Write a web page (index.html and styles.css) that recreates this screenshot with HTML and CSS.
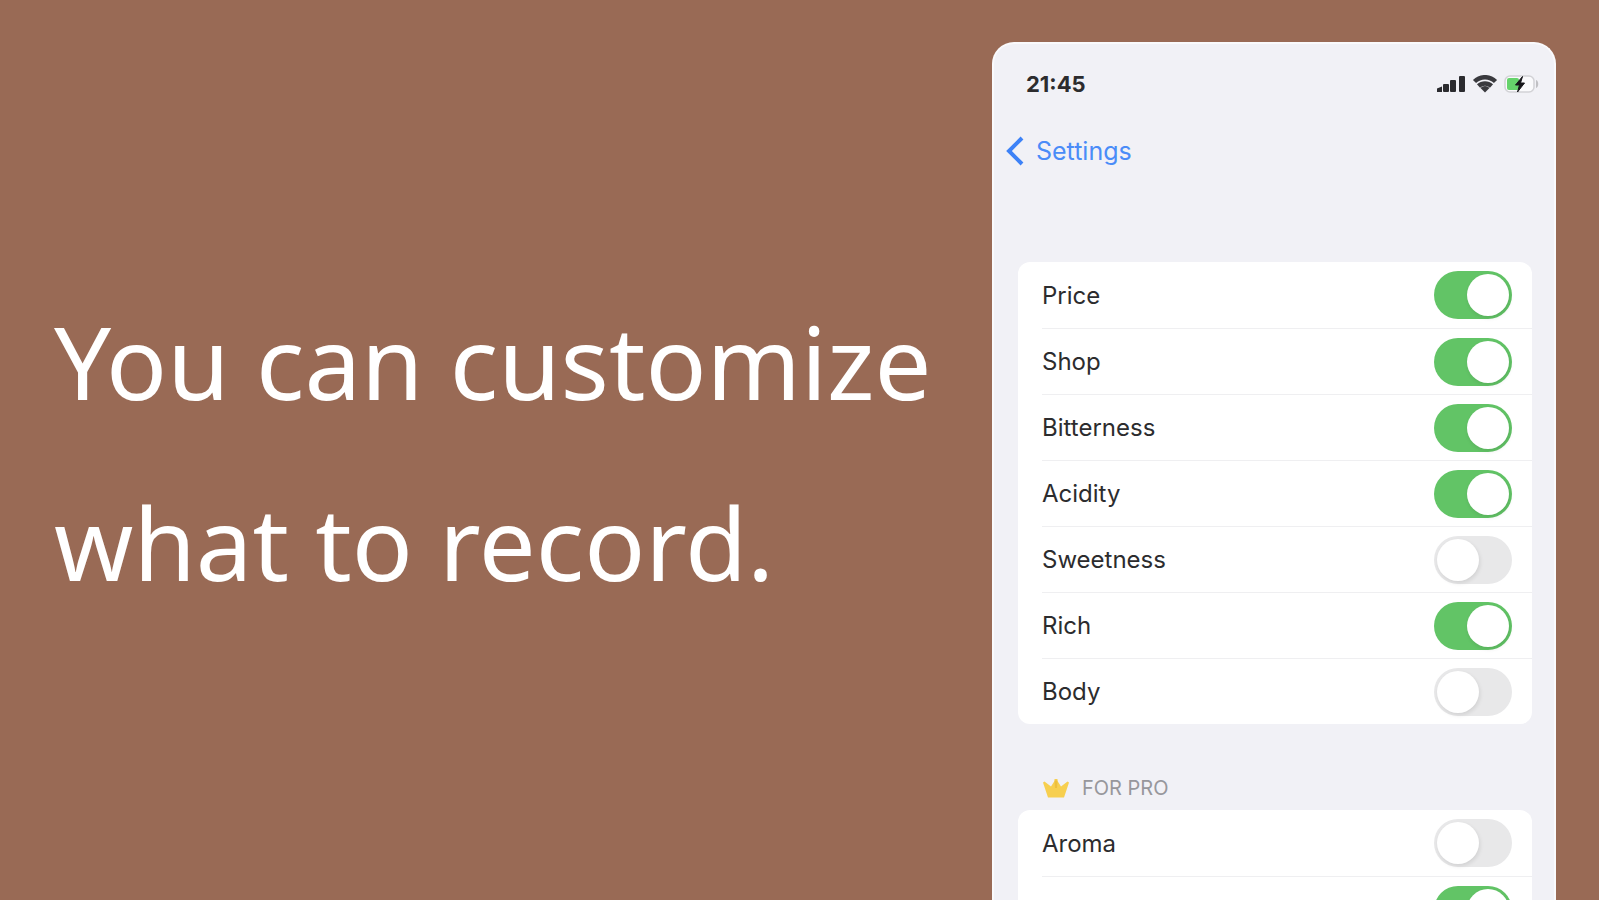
FILE: index.html
```html
<!DOCTYPE html>
<html lang="en">
<head>
  <meta charset="UTF-8">
  <meta name="viewport" content="width=device-width, initial-scale=1.0">
  <title>Customize what to record</title>
  <link rel="stylesheet" href="styles.css">
</head>
<body>
  <main class="slide">
    <h1 class="headline">You can customize<br>what to record.</h1>

    <section class="phone">
      <!-- Status bar -->
      <div class="status-bar">
        <span class="clock">21:45</span>
        <div class="status-icons">
          <svg width="30" height="18" viewBox="0 0 30 18" fill="#2b2b2f">
            <path d="M1 17v-3.500l5-2V17z"/>
            <rect x="7" y="9" width="6" height="8" rx="1"/>
            <rect x="14" y="5" width="6" height="12" rx="1"/>
            <rect x="23" y="1" width="6" height="16" rx="1"/>
          </svg>
          <svg width="26" height="18" viewBox="0 0 26 18" fill="none" stroke="#3a3a3e" stroke-width="4.500">
            <path d="M2.500 6.500a15 15 0 0 1 21 0"/>
            <path d="M6.500 11a9.500 9.500 0 0 1 13 0"/>
            <path d="M13 17.500l-4.500-4.500a6 6 0 0 1 9 0z" fill="#3a3a3e" stroke="none"/>
          </svg>
          <svg width="36" height="18" viewBox="0 0 36 18">
            <rect x="1" y="1" width="29" height="16" rx="5" fill="#fafafc" stroke="#d2d2d6" stroke-width="1.500"/>
            <path d="M32 5c3 1 3 7 0 8z" fill="#c0c0c4"/>
            <rect x="3" y="3" width="12" height="12" rx="2" fill="#65d36b"/>
            <path d="M18.500 1.500l-7 8.500h4l-2 7 7-9h-4z" fill="#16161a" stroke="#16161a"/>
          </svg>
        </div>
      </div>

      <!-- Back link -->
      <nav class="nav-bar">
        <a class="back" href="#">
          <svg width="18" height="30" viewBox="0 0 18 30" fill="none" stroke="#3d82f7" stroke-width="4">
            <path d="M16 2L3 15l13 13"/>
          </svg>
          Settings
        </a>
      </nav>

      <div class="card">
        <label class="row"><span>Price</span><input type="checkbox" class="switch" checked></label>
        <label class="row"><span>Shop</span><input type="checkbox" class="switch" checked></label>
        <label class="row"><span>Bitterness</span><input type="checkbox" class="switch" checked></label>
        <label class="row"><span>Acidity</span><input type="checkbox" class="switch" checked></label>
        <label class="row"><span>Sweetness</span><input type="checkbox" class="switch"></label>
        <label class="row"><span>Rich</span><input type="checkbox" class="switch" checked></label>
        <label class="row"><span>Body</span><input type="checkbox" class="switch"></label>
      </div>

      <!-- Pro items -->
      <h2 class="group-title">
        <svg width="28" height="20" viewBox="0 0 28 20" fill="#f7cf4f">
          <path d="M6 19.500L1 4.500 2.500 3.500 9 8.500 12.500 3V1h3v2L19 8.500l6.500-5 1.500 1L22 19.500z"/>
          <path d="M12.500 2.500h3L15 10h-2z" fill="#eebf3c"/>
        </svg>
        FOR PRO
      </h2>
      <div class="card">
        <label class="row"><span>Aroma</span><input type="checkbox" class="switch"></label>
        <label class="row"><input type="checkbox" class="switch" aria-label="Pro item" checked></label>
      </div>
    </section>
  </main>
</body>
</html>
```

FILE: styles.css
```css
* {
    box-sizing: border-box;
}

body {
    margin: 0;
    background-color: #996a55;
    font-family: Inter, "Liberation Sans", sans-serif;
    color: #2c2c2e;
}

.slide {
    display: flex;
    justify-content: space-between;
    height: 100vh;
    padding: 42px 43px 0 54px;
    overflow: hidden;
}

/* Headline */
.headline {
    margin: 229px 0 0;
    font-family: "Noto Sans", sans-serif;
    font-size: 101px;
    font-weight: 400;
    line-height: 181px;
    color: #fff;
    white-space: nowrap;
}

/* Phone */
.phone {
    flex: none;
    align-self: flex-start;
    width: 38%;
    max-width: 564px;
    padding: 0 22px 0 24px;
    background-color: #f1f1f6;
    border: 2px solid #fafafc;
    border-bottom: none;
    border-radius: 22px 22px 0 0;
}

.status-bar {
    display: flex;
    justify-content: space-between;
    align-items: center;
    height: 80px;
    padding-left: 8px;
}

.clock {
    font-size: 22px;
    font-weight: 700;
}

.status-icons {
    display: flex;
    gap: 6px;
    margin-right: -8px;
}

.nav-bar {
    height: 138px;
    margin-left: -12px;
    padding-top: 12px;
}

.back {
    display: inline-flex;
    align-items: center;
    gap: 12px;
    font-size: 25px;
    line-height: 30px;
    color: #4a8cf8;
    text-decoration: none;
}

/* Settings list */
.card {
    background-color: #fff;
    border-radius: 12px;
}

.row {
    display: flex;
    align-items: center;
    height: 66px;
    margin-left: 24px;
    padding-right: 20px;
    font-size: 24px;
}

.row + .row {
    border-top: 1px solid #efeff1;
}

.switch {
    appearance: none;
    width: 78px;
    height: 48px;
    margin: 0 0 0 auto;
    padding: 3px;
    background-color: #e8e8e9;
    border-radius: 24px;
    cursor: pointer;
}

.switch::before {
    content: "";
    display: block;
    width: 42px;
    height: 42px;
    border-radius: 50%;
    background-color: #fff;
    box-shadow: 1px 2px 4px rgba(0, 0, 0, 0.1);
}

.switch:checked {
    background-color: #62c466;
}

.switch:checked::before {
    margin-left: auto;
}

.group-title {
    display: flex;
    align-items: center;
    gap: 12px;
    margin: 52px 0 10px 24px;
    font-size: 20px;
    font-weight: 400;
    line-height: 24px;
    color: #97979c;
}
```
